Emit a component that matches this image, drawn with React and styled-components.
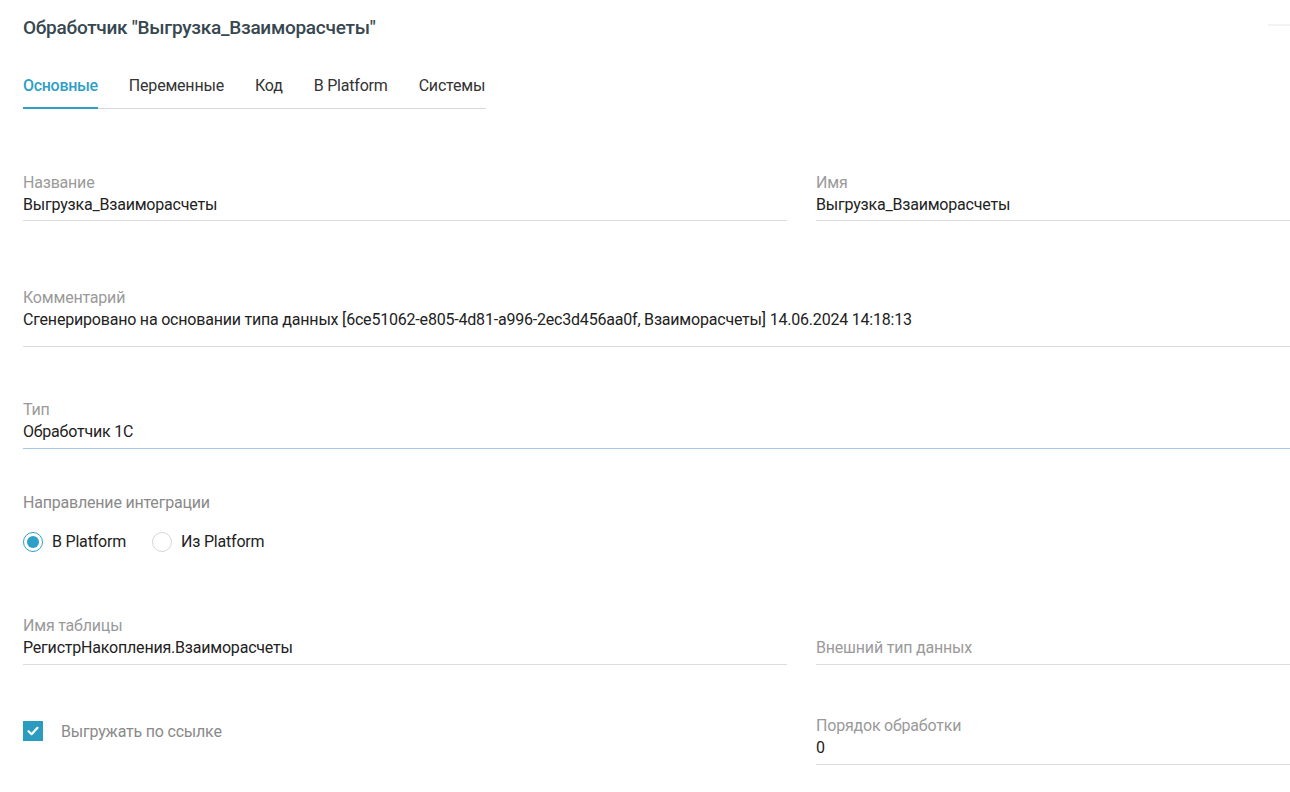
import React from "react";
import styled, { createGlobalStyle } from "styled-components";

const Global = createGlobalStyle`
  html, body { margin: 0; padding: 0; background: #fff; }
  body { font-family: Roboto, "Noto Sans", sans-serif; color: #222; letter-spacing: -0.2px; }
  * { box-sizing: border-box; }
`;

const Page = styled.div`
  width: 1290px;
  padding: 0 0 0 23px;
`;

const Header = styled.div`
  display: flex;
  justify-content: space-between;
  align-items: center;
  height: 54px;
`;

const Title = styled.h1`
  margin: 0;
  font-size: 19px;
  font-weight: 500;
  color: #37474f;
  letter-spacing: -0.27px;
`;

const HeaderStub = styled.div`
  width: 22px;
  height: 2px;
  background: #f3f3f3;
  margin-top: -4px;
`;

const Tabs = styled.div`
  display: flex;
  gap: 31px;
  width: 463px;
  border-bottom: 1px solid #d9d9d9;
  margin-top: 8px;
  height: 47px;
`;

const Tab = styled.div`
  font-size: 16px;
  line-height: 20px;
  padding-top: 14px;
  height: 47px;
  white-space: nowrap;
  color: ${(p) => (p.$active ? "#2e9fc6" : "#333")};
  font-weight: ${(p) => (p.$active ? 500 : 400)};
  letter-spacing: ${(p) => (p.$active ? "-0.3px" : "-0.2px")};
  border-bottom: 2px solid ${(p) => (p.$active ? "#2e9fc6" : "transparent")};
  margin-bottom: -1px;
`;

const Row = styled.div`
  display: grid;
  grid-template-columns: ${(p) => (p.$split ? "764px 1fr" : "1fr")};
  column-gap: 29px;
  margin-top: ${(p) => p.$top}px;
  align-items: ${(p) => p.$align || "stretch"};
`;

const Field = styled.div`
  display: flex;
  flex-direction: column;
  border-bottom: 1px solid ${(p) => (p.$focus ? "#a6c8e8" : "#dcdcdc")};
  padding-bottom: ${(p) => p.$pad ?? 5}px;
`;

const Label = styled.div`
  font-size: 16px;
  line-height: 20px;
  color: #9a9a9a;
`;

const Value = styled.div`
  font-size: 16px;
  line-height: 22px;
  color: #222;
  margin-top: 1px;
`;

const Placeholder = styled.div`
  font-size: 16px;
  line-height: 22px;
  color: #9a9a9a;
  padding-top: 21px;
`;

const GroupLabel = styled.div`
  font-size: 16px;
  line-height: 20px;
  color: #8a8a8a;
`;

const RadioGroup = styled.div`
  display: flex;
  align-items: center;
  margin-top: 19px;
  gap: 26px;
`;

const RadioItem = styled.label`
  display: flex;
  align-items: center;
  gap: 9px;
  font-size: 16px;
  color: #222;
  line-height: 20px;
`;

const RadioCircle = styled.span`
  width: 20px;
  height: 20px;
  border-radius: 50%;
  border: 1px solid ${(p) => (p.$checked ? "#2e9fc6" : "#d6d6d6")};
  display: flex;
  align-items: center;
  justify-content: center;
  &::after {
    content: "";
    width: 12px;
    height: 12px;
    border-radius: 50%;
    background: ${(p) => (p.$checked ? "#2e9fc6" : "transparent")};
  }
`;

const CheckRow = styled.label`
  display: flex;
  align-items: center;
  gap: 18px;
  font-size: 16px;
  color: #8a8a8a;
  margin-top: 5px;
`;

const CheckBox = styled.span`
  width: 20px;
  height: 20px;
  background: #2b9bbf;
  display: flex;
  align-items: center;
  justify-content: center;
`;

export default function App() {
  return (
    <Page>
      <Global />
      <Header>
        <Title>Обработчик "Выгрузка_Взаиморасчеты"</Title>
        <HeaderStub />
      </Header>
      <Tabs>
        <Tab $active>Основные</Tab>
        <Tab>Переменные</Tab>
        <Tab>Код</Tab>
        <Tab>В Platform</Tab>
        <Tab>Системы</Tab>
      </Tabs>

      <Row $split $top={64}>
        <Field $pad={4}>
          <Label>Название</Label>
          <Value>Выгрузка_Взаиморасчеты</Value>
        </Field>
        <Field $pad={4}>
          <Label>Имя</Label>
          <Value>Выгрузка_Взаиморасчеты</Value>
        </Field>
      </Row>

      <Row $top={67}>
        <Field $pad={15}>
          <Label>Комментарий</Label>
          <Value>
            Сгенерировано на основании типа данных [6ce51062-e805-4d81-a996-2ec3d456aa0f, Взаиморасчеты] 14.06.2024 14:18:13
          </Value>
        </Field>
      </Row>

      <Row $top={53}>
        <Field $focus>
          <Label>Тип</Label>
          <Value>Обработчик 1С</Value>
        </Field>
      </Row>

      <Row $top={44}>
        <div>
          <GroupLabel>Направление интеграции</GroupLabel>
          <RadioGroup>
            <RadioItem>
              <RadioCircle $checked />
              В Platform
            </RadioItem>
            <RadioItem>
              <RadioCircle />
              Из Platform
            </RadioItem>
          </RadioGroup>
        </div>
      </Row>

      <Row $split $top={64}>
        <Field>
          <Label>Имя таблицы</Label>
          <Value>РегистрНакопления.Взаиморасчеты</Value>
        </Field>
        <Field>
          <Placeholder>Внешний тип данных</Placeholder>
        </Field>
      </Row>

      <Row $split $top={51} $align="start">
        <CheckRow>
          <CheckBox>
            <svg width="14" height="14" viewBox="0 0 14 14">
              <path d="M2.5 7.2 L5.6 10.2 L11.5 3.8" fill="none" stroke="#fff" strokeWidth="2.2" strokeLinecap="round" strokeLinejoin="round" />
            </svg>
          </CheckBox>
          Выгружать по ссылке
        </CheckRow>
        <Field>
          <Label>Порядок обработки</Label>
          <Value>0</Value>
        </Field>
      </Row>
    </Page>
  );
}
